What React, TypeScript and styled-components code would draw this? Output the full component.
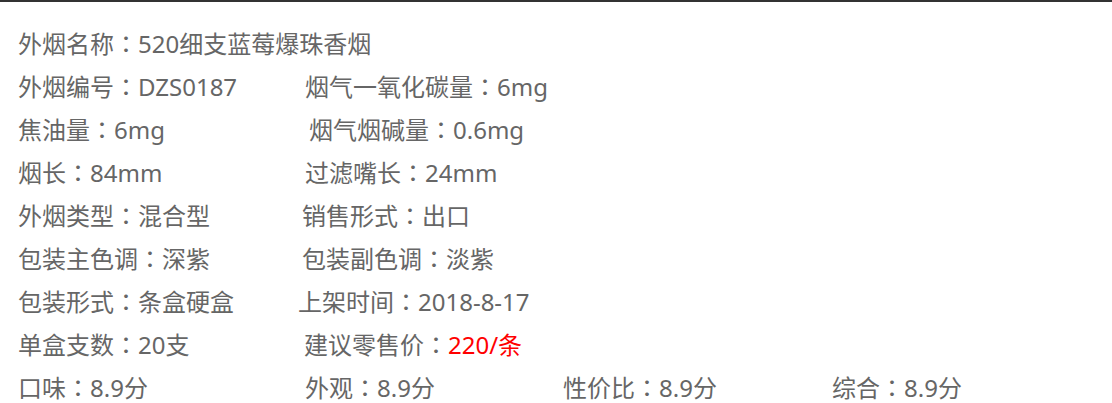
import React from 'react';
import styled, { createGlobalStyle } from 'styled-components';

const GlobalStyle = createGlobalStyle`
  html, body {
    margin: 0;
    padding: 0;
    background: #fff;
  }
`;

const S = {
  Panel: styled.div`
    width: 1112px;
    height: 403px;
    box-sizing: border-box;
    border-top: 2px solid #333;
    padding: 20px 0 0 18px;
    font-family: 'Noto Sans', 'Noto Sans CJK SC', sans-serif;
    font-size: 24px;
    color: #666;
    overflow: hidden;
  `,
  Row: styled.div`
    display: flex;
    align-items: center;
    height: 43px;
    white-space: nowrap;
  `,
  Item: styled.span<{ $width?: number }>`
    flex: 0 0 ${(p) => (p.$width ? `${p.$width}px` : 'auto')};
    line-height: 30px;
  `,
  // centred full-width colon, as the original font draws it
  Colon: styled.span`
    font-family: 'Noto Sans CJK JP', 'Noto Sans CJK SC', sans-serif;
  `,
  Value: styled.span<{ $hot?: boolean }>`
    color: ${(p) => (p.$hot ? '#f00' : 'inherit')};
  `,
};

type Cell = { label: string; value: string; width?: number; hot?: boolean };

const rows: Cell[][] = [
  [{ label: '外烟名称', value: '520细支蓝莓爆珠香烟' }],
  [
    { label: '外烟编号', value: 'DZS0187', width: 287 },
    { label: '烟气一氧化碳量', value: '6mg' },
  ],
  [
    { label: '焦油量', value: '6mg', width: 291 },
    { label: '烟气烟碱量', value: '0.6mg' },
  ],
  [
    { label: '烟长', value: '84mm', width: 287 },
    { label: '过滤嘴长', value: '24mm' },
  ],
  [
    { label: '外烟类型', value: '混合型', width: 284 },
    { label: '销售形式', value: '出口' },
  ],
  [
    { label: '包装主色调', value: '深紫', width: 284 },
    { label: '包装副色调', value: '淡紫' },
  ],
  [
    { label: '包装形式', value: '条盒硬盒', width: 280 },
    { label: '上架时间', value: '2018-8-17' },
  ],
  [
    { label: '单盒支数', value: '20支', width: 286 },
    { label: '建议零售价', value: '220/条', hot: true },
  ],
  [
    { label: '口味', value: '8.9分', width: 287 },
    { label: '外观', value: '8.9分', width: 258 },
    { label: '性价比', value: '8.9分', width: 269 },
    { label: '综合', value: '8.9分' },
  ],
];

const App = () => {
  return (
    <>
      <GlobalStyle />
      <S.Panel>
        {rows.map((row, i) => (
          <S.Row key={i}>
            {row.map((cell, j) => (
              <S.Item key={j} $width={cell.width}>
                {cell.label}
                <S.Colon>：</S.Colon>
                <S.Value $hot={cell.hot}>{cell.value}</S.Value>
              </S.Item>
            ))}
          </S.Row>
        ))}
      </S.Panel>
    </>
  );
};

export default App;
